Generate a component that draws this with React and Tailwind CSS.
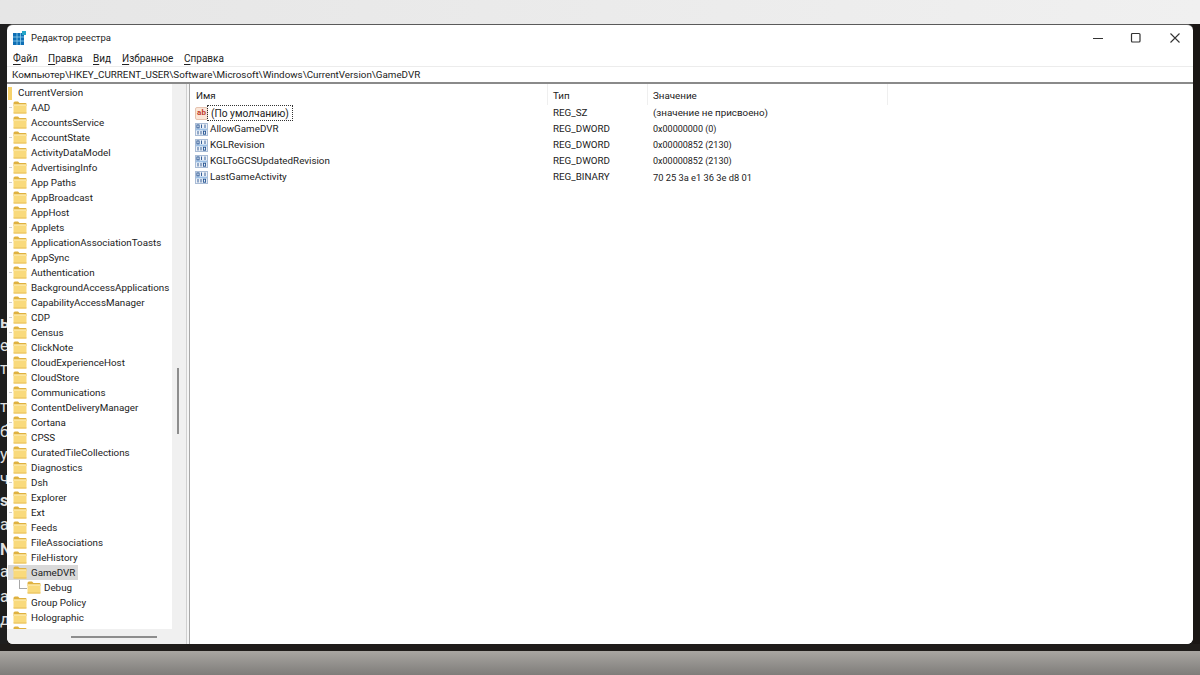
import React from "react";

const font = "font-['Roboto',sans-serif]";

const treeRows = [
  { name: "AAD", tick: true },
  { name: "AccountsService" },
  { name: "AccountState", tick: true },
  { name: "ActivityDataModel" },
  { name: "AdvertisingInfo", tick: true },
  { name: "App Paths", tick: true },
  { name: "AppBroadcast" },
  { name: "AppHost" },
  { name: "Applets", tick: true },
  { name: "ApplicationAssociationToasts", tick: true },
  { name: "AppSync" },
  { name: "Authentication", tick: true },
  { name: "BackgroundAccessApplications" },
  { name: "CapabilityAccessManager", tick: true },
  { name: "CDP", tick: true },
  { name: "Census", tick: true },
  { name: "ClickNote" },
  { name: "CloudExperienceHost" },
  { name: "CloudStore" },
  { name: "Communications", tick: true },
  { name: "ContentDeliveryManager" },
  { name: "Cortana", tick: true },
  { name: "CPSS" },
  { name: "CuratedTileCollections" },
  { name: "Diagnostics" },
  { name: "Dsh", tick: true },
  { name: "Explorer" },
  { name: "Ext", tick: true },
  { name: "Feeds" },
  { name: "FileAssociations" },
  { name: "FileHistory" },
];

const values = [
  { name: "AllowGameDVR", type: "REG_DWORD", value: "0x00000000 (0)", cls: "text-[9px]" },
  { name: "KGLRevision", type: "REG_DWORD", value: "0x00000852 (2130)", cls: "text-[9px]" },
  { name: "KGLToGCSUpdatedRevision", type: "REG_DWORD", value: "0x00000852 (2130)", cls: "text-[9px]" },
  { name: "LastGameActivity", type: "REG_BINARY", value: "70 25 3a e1 36 3e d8 01", cls: "text-[9.3px]" },
];

const stripRows = [
  { text: "ы", cls: "h-[23px] font-bold" },
  { text: "е", cls: "h-[23px]" },
  { text: "т", cls: "h-[38px]" },
  { text: "т", cls: "h-[25px]" },
  { text: "б", cls: "h-[23px]" },
  { text: "у", cls: "h-[24px]" },
  { text: "ч", cls: "h-[22px]" },
  { text: "s", cls: "h-[24px] font-bold" },
  { text: "а", cls: "h-[25px]" },
  { text: "N", cls: "h-[22px] font-bold" },
  { text: "а", cls: "h-[25px]" },
  { text: "а", cls: "h-[23px]" },
  { text: "д", cls: "h-[23px]" },
];

const Folder = () => (
  <svg width="14" height="13" viewBox="0 0 14 13" className="shrink-0">
    <path d="M0.5 2 Q0.5 0.5 2 0.5 H5 L6.5 2 H12.5 Q13.5 2 13.5 3 V5 H0.5 Z" fill="#dfb13f" />
    <rect x="0.5" y="3.5" width="13" height="9" rx="0.8" fill="#f9da7c" />
    <rect x="0.5" y="3.5" width="13" height="1" fill="#fdf0bd" />
    <rect x="0.5" y="11.5" width="13" height="1" fill="#e8c05a" />
  </svg>
);

const BinaryIcon = () => (
  <svg width="13" height="13" viewBox="0 0 13 13" className="shrink-0">
    <rect x="0.5" y="0.5" width="12" height="12" fill="#eef2f8" stroke="#a9bcd6" />
    <rect x="1" y="5.6" width="11" height="1.8" fill="#9cc0e6" />
    <g fill="none" stroke="#1f4f8f" strokeWidth="0.9">
      <rect x="1.9" y="1.9" width="2.2" height="3" />
      <path d="M6.5 1.5 V5 M10 1.5 V5" />
      <path d="M3 8 V11.5 M6 8 V11.5" />
      <rect x="8.4" y="8.2" width="2.2" height="3" />
    </g>
  </svg>
);

const RegeditIcon = () => (
  <svg width="14" height="14" viewBox="0 0 14 14" className="shrink-0">
    <rect x="0" y="2" width="11" height="12" fill="#0f6fb5" />
    <rect x="3.6" y="2" width="0.8" height="12" fill="#8fd0ee" />
    <rect x="7.2" y="2" width="0.8" height="12" fill="#8fd0ee" />
    <rect x="0" y="5.6" width="11" height="0.8" fill="#8fd0ee" />
    <rect x="0" y="9.6" width="11" height="0.8" fill="#8fd0ee" />
    <rect x="9" y="0" width="4" height="4" fill="#25a7c9" />
  </svg>
);

const Menu = ({ first, rest, cls }) => (
  <span className={cls}>
    <span className="underline underline-offset-2">{first}</span>
    {rest}
  </span>
);

export default function App() {
  return (
    <div className={`flex h-[675px] w-[1200px] flex-col overflow-hidden bg-[#1d1b1a] ${font}`}>
      <div className="h-6 shrink-0 bg-gradient-to-r from-[#e6e6e6] to-[#f0f0f0]" />

      <div className="flex h-[620px] shrink-0">
        {/* text of the page behind the window */}
        <div className="flex w-[7px] shrink-0 flex-col overflow-hidden bg-[#1e1e1e] pt-[288px] text-[16px] leading-[22px] text-[#e0e0e0]">
          {stripRows.map((row, i) => (
            <div key={i} className={`shrink-0 ${row.cls}`}>
              {row.text}
            </div>
          ))}
        </div>

        {/* window */}
        <div className="flex min-w-0 flex-1 flex-col overflow-hidden rounded-md border-t border-t-[#5a5a5a] bg-white text-[9.8px] text-[#222]">
          <div className="flex h-[25px] shrink-0 items-center pl-[6px] pt-[1px]">
            <RegeditIcon />
            <span className="ml-[4px] text-[9.5px]">Редактор реестра</span>
            <div className="ml-auto flex items-center">
              <svg width="12" height="12" viewBox="0 0 12 12" className="mr-[26px]">
                <path d="M1 6.5 H11" stroke="#333" strokeWidth="1.2" />
              </svg>
              <svg width="12" height="12" viewBox="0 0 12 12" className="mr-[27px]">
                <rect x="1.5" y="1.5" width="8.5" height="8.5" rx="1" fill="none" stroke="#333" strokeWidth="1.2" />
              </svg>
              <svg width="12" height="12" viewBox="0 0 12 12" className="mr-[12px]">
                <path d="M1.5 1.5 L10.5 10.5 M10.5 1.5 L1.5 10.5" stroke="#333" strokeWidth="1.1" />
              </svg>
            </div>
          </div>

          <div className="flex h-[16px] shrink-0 items-center pl-[6px] pt-[1px] text-[10px]">
            <Menu first="Ф" rest="айл" cls="w-[35px]" />
            <Menu first="П" rest="равка" cls="w-[45px]" />
            <Menu first="В" rest="ид" cls="w-[29px]" />
            <Menu first="И" rest="збранное" cls="w-[62px]" />
            <Menu first="С" rest="правка" />
          </div>

          <div className="flex h-[18px] shrink-0 items-center border-t border-t-[#ececec] border-b-2 border-b-[#8a8a8a] pl-[5px] pt-[1px]">
            Компьютер\HKEY_CURRENT_USER\Software\Microsoft\Windows\CurrentVersion\GameDVR
          </div>

          <div className="flex min-h-0 flex-1">
            {/* tree */}
            <div className="flex w-[179px] shrink-0 flex-col bg-[#f0f0f0]">
              <div className="flex min-h-0 flex-1">
                <div className="min-h-0 w-[165px] shrink-0 overflow-hidden bg-white pl-[1px] pt-[1px]">
                  <div className="flex h-[15px] items-center pt-[1px]">
                    <div className="mr-[5px] h-[13px] w-[4px] bg-[#f6d26c]" />
                    <span className="ml-[1px]">CurrentVersion</span>
                  </div>
                  {treeRows.map((row) => (
                    <div key={row.name} className="flex h-[15px] items-center">
                      <div className={row.tick ? "mx-[1px] h-px w-[3px] shrink-0 bg-[#cfcfcf]" : "mx-[1px] h-px w-[3px] shrink-0"} />
                      <Folder />
                      <span className="ml-[4px] whitespace-nowrap pt-[1px]">{row.name}</span>
                    </div>
                  ))}
                  <div className="flex h-[15px] w-[70px] items-center bg-[#d9d9d9] pl-[5px]">
                    <Folder />
                    <span className="ml-[4px] pt-[1px]">GameDVR</span>
                  </div>
                  <div className="flex h-[15px] items-center pl-[11px]">
                    <div className="h-[9px] w-[8px] shrink-0 self-start border-b border-l border-[#a8a8a8]" />
                    <Folder />
                    <span className="ml-[3px] pt-[1px]">Debug</span>
                  </div>
                  <div className="flex h-[15px] items-center pl-[5px]">
                    <Folder />
                    <span className="ml-[4px] pt-[1px]">Group Policy</span>
                  </div>
                  <div className="flex h-[15px] items-center pl-[5px]">
                    <Folder />
                    <span className="ml-[4px] pt-[1px]">Holographic</span>
                  </div>
                  <div className="flex h-[15px] items-center pl-[5px]">
                    <Folder />
                  </div>
                </div>
                <div className="flex-1 pl-[5px] pt-[284px]">
                  <div className="h-[66px] w-[2px] bg-[#8d8d8d]" />
                </div>
              </div>
              <div className="flex h-[15px] shrink-0 items-center pl-[64px]">
                <div className="h-[2px] w-[86px] bg-[#8d8d8d]" />
              </div>
            </div>

            {/* splitter */}
            <div className="w-[4px] shrink-0 border-l border-r border-l-[#d0d0d0] border-r-[#a8a8a8] bg-[#f5f5f5]" />

            {/* values */}
            <div className="min-w-0 flex-1 bg-white">
              <div className="flex h-[21px] items-center">
                <div className="h-full w-[358px] border-r border-r-[#efefef] pl-[6px] pt-[1px] leading-[21px]">Имя</div>
                <div className="h-full w-[100px] border-r border-r-[#efefef] pl-[5px] pt-[1px] leading-[21px]">Тип</div>
                <div className="h-full w-[240px] border-r border-r-[#efefef] pl-[5px] pt-[1px] leading-[21px]">Значение</div>
              </div>
              <div className="flex h-[16px] items-center">
                <div className="flex w-[358px] items-center pl-[5px]">
                  <div className="flex h-[13px] w-[13px] shrink-0 items-center justify-center rounded-[2px] border border-[#e6c3b0] bg-[#fbe6d8] text-[8px] font-bold leading-none text-[#c0392b]">
                    ab
                  </div>
                  <span className="ml-[-1px] border border-dotted border-[#333] px-[3px] pt-[1px] text-[10.2px] leading-[13px]">(По умолчанию)</span>
                </div>
                <div className="w-[100px] pl-[5px] pt-[1px]">REG_SZ</div>
                <div className="pl-[5px] pt-[1px]">(значение не присвоено)</div>
              </div>
              {values.map((row) => (
                <div key={row.name} className="flex h-[16px] items-center">
                  <div className="flex w-[358px] items-center pl-[5px]">
                    <BinaryIcon />
                    <span className="ml-[2px] pt-[1px]">{row.name}</span>
                  </div>
                  <div className="w-[100px] pl-[5px] pt-[1px]">{row.type}</div>
                  <div className={`pl-[5px] pt-[1px] ${row.cls}`}>{row.value}</div>
                </div>
              ))}
            </div>
          </div>
        </div>

        <div className="w-[7px] shrink-0 bg-[#1a1614]" />
      </div>

      <div className="h-[7px] shrink-0 bg-[#1f1c1a]" />
      <div className="flex-1 bg-gradient-to-b from-[#a9a6a2] to-[#7f7d7a]" />
    </div>
  );
}
